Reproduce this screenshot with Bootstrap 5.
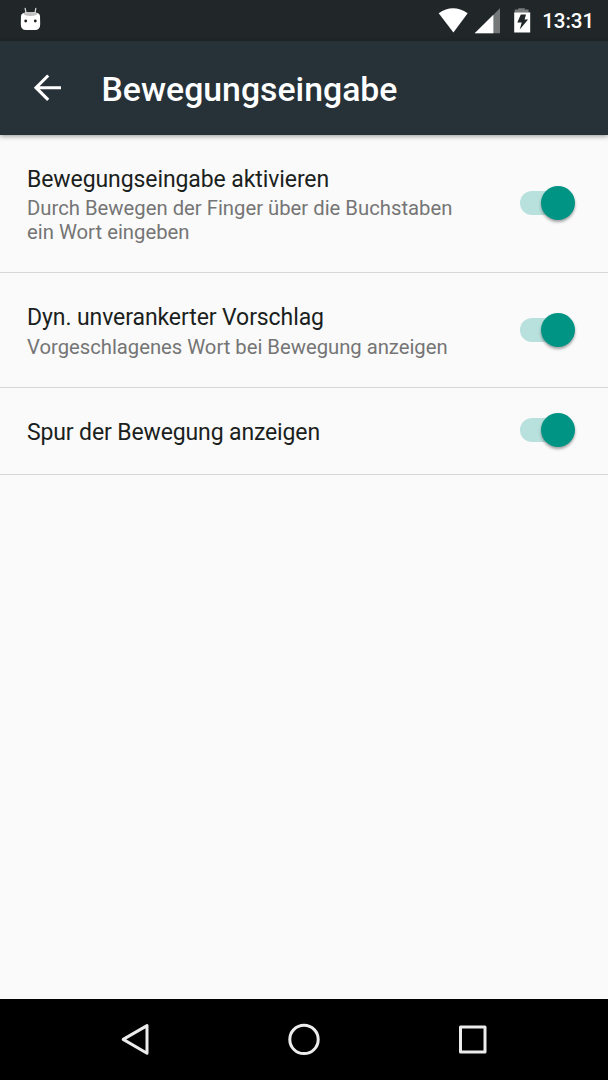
<!DOCTYPE html>
<html lang="de">
<head>
<meta charset="utf-8">
<meta name="viewport" content="width=device-width, initial-scale=1">
<title>Bewegungseingabe</title>
<link href="https://cdn.jsdelivr.net/npm/bootstrap@5.3.0/dist/css/bootstrap.min.css" rel="stylesheet">
<style>
  body { font-family: Roboto, "Liberation Sans", sans-serif; background: #fafafa; color: #1b1f20; }
  svg { display: block; flex: none; }
  .statusbar { height: 41px; background: #212729; color: #fff; padding: 0 14px 2px 20px; }
  .clock { font-size: 20.6px; line-height: 24px; font-weight: 500; letter-spacing: -.1px; padding-top: 2px; }
  .appbar { height: 94px; background: #273238; color: #fff; padding: 0 0 0 33px; box-shadow: 0 1px 5px rgba(0,0,0,.42); z-index: 1; }
  .appbar h1 { font-size: 33.8px; line-height: 40px; font-weight: 500; margin: 4px 0 0 40.5px; }
  .list-group-flush > .list-group-item.setting { border-width: 0 0 1px; border-color: #d6d6d6; border-radius: 0; background: #fafafa; padding: 0 33px 0 27px; color: inherit; }
  .list-group-flush > .list-group-item.setting:last-child { border-bottom-width: 1px; }
  .setting-a { height: 138px; }
  .setting-b { height: 115px; }
  .setting-c { height: 87px; }
  .copy { width: 450px; padding-top: 30.5px; }
  .name { font-size: 23px; line-height: 28px; letter-spacing: -.09px; }
  .setting-c .name { letter-spacing: -.13px; }
  .summary { font-size: 20.27px; line-height: 23.7px; color: #757575; margin-top: 3.7px; }
  .setting-b .summary { margin-top: 4.3px; letter-spacing: -.02px; }
  .form-switch.toggle { padding: 0; margin: 0; width: 55px; height: 34px; min-height: 0; position: relative; }
  .form-switch.toggle .form-check-input { appearance: none; margin: 5px 0 0; float: none; display: block; width: 48px; height: 24px; border: 0; border-radius: 12px; background: #b8e1dd; box-shadow: none; }
  .toggle::after { content: ""; position: absolute; right: 0; top: 0; width: 34px; height: 34px; border-radius: 50%; background: #009485; box-shadow: 0 2px 3px rgba(0,0,0,.36); }
  .setting-a .toggle { margin-bottom: 1px; }
  .setting-c .toggle { margin-bottom: 3px; }
  .softkeys { height: 81px; background: #000; padding: 0 120px 1px; }
</style>
</head>
<body>
<div class="d-flex flex-column vh-100 overflow-hidden">
  <header class="statusbar d-flex align-items-center justify-content-between">
    <svg width="22" height="26" viewBox="0 0 22 26">
      <path d="M5.200 1.500l1 5.500M15.800 1.500l-1 5.500" stroke="#d6d8d8" stroke-width="1.300" stroke-linecap="round"/>
      <path d="M1 9Q1 5 10.500 5Q20 5 20 9L20.200 17Q20.200 23 15 23H6Q.8 23 .8 17Z" fill="#fff"/>
      <path d="M3 6.600Q6 5 10.500 5Q15 5 18 6.600Q16 9.100 10.500 8.900Q5 9.100 3 6.600Z" fill="#c2c2c2"/>
      <circle cx="5.700" cy="14" r="1.400" fill="#222"/><circle cx="15.300" cy="14" r="1.400" fill="#222"/>
    </svg>
    <div class="d-flex align-items-center">
      <svg width="104" height="30" viewBox="0 0 104 30">
        <path d="M.7 8.200Q14.900-1.800 29.700 8.200L15.400 27.500Z" fill="#fff"/>
        <path d="M62 3.200V28.300H36.700Z" fill="#747879"/>
        <path d="M55.400 9.700V28.300H36.700Z" fill="#fff"/>
        <path d="M80.300 3.200h6.500v1.400h3.700V7.500H76.700V4.600h3.600Z" fill="#777b7c"/>
        <path d="M76.200 7.400H92.200V27.500H76.200Z" fill="#fff"/>
        <path d="M82.800 9.500h5.200l-1.400 5h3.500l-8.400 10 2-7h-4.400Z" fill="#212729"/>
      </svg>
      <span class="clock">13:31</span>
    </div>
  </header>

  <nav class="appbar d-flex align-items-center position-relative">
    <svg width="28" height="28" viewBox="0 0 28 28" fill="none" stroke="#fff" stroke-width="3.100">
      <path d="M28 13.700H4M15.200 1.500L3 13.700L15.200 25.900"/>
    </svg>
    <h1>Bewegungseingabe</h1>
  </nav>

  <main class="list-group list-group-flush flex-grow-1">
    <label class="list-group-item setting setting-a d-flex justify-content-between">
      <span class="copy"><span class="name d-block">Bewegungseingabe aktivieren</span>
      <span class="summary d-block">Durch Bewegen der Finger über die Buchstaben<br>ein Wort eingeben</span></span>
      <span class="form-check form-switch toggle align-self-center"><input class="form-check-input" type="checkbox" role="switch" checked></span>
    </label>
    <label class="list-group-item setting setting-b d-flex justify-content-between">
      <span class="copy"><span class="name d-block">Dyn. unverankerter Vorschlag</span>
      <span class="summary d-block">Vorgeschlagenes Wort bei Bewegung anzeigen</span></span>
      <span class="form-check form-switch toggle align-self-center"><input class="form-check-input" type="checkbox" role="switch" checked></span>
    </label>
    <label class="list-group-item setting setting-c d-flex justify-content-between">
      <span class="copy"><span class="name d-block">Spur der Bewegung anzeigen</span></span>
      <span class="form-check form-switch toggle align-self-center"><input class="form-check-input" type="checkbox" role="switch" checked></span>
    </label>
  </main>

  <footer class="softkeys d-flex align-items-center justify-content-between">
    <svg width="32" height="34" viewBox="0 0 32 34" fill="none" stroke="#ececec" stroke-width="3" stroke-linejoin="round"><path d="M27 3.600V31.200L3.200 17.400Z"/></svg>
    <svg width="32" height="34" viewBox="0 0 32 34" fill="none" stroke="#ececec" stroke-width="3"><circle cx="16" cy="17.400" r="14.200"/></svg>
    <svg width="32" height="34" viewBox="0 0 32 34" fill="none" stroke="#ececec" stroke-width="3" stroke-linejoin="round"><path d="M4.500 5H29V30H4.500Z"/></svg>
  </footer>
</div>
<script src="https://cdn.jsdelivr.net/npm/bootstrap@5.3.0/dist/js/bootstrap.bundle.min.js"></script>
</body>
</html>
